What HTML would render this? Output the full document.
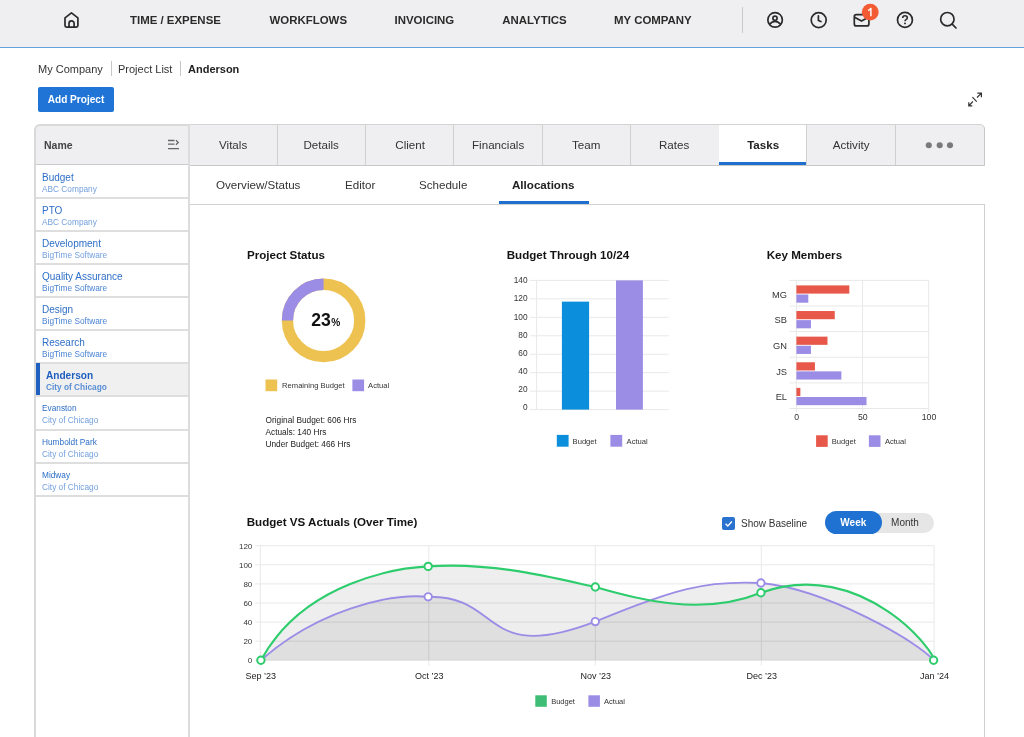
<!DOCTYPE html>
<html><head><meta charset="utf-8">
<style>
*{box-sizing:border-box;margin:0;padding:0}
html,body{width:1024px;height:737px;overflow:hidden;background:#fff}
body>*{will-change:transform}
body{position:relative;font-family:"Liberation Sans",sans-serif;color:#333}
.a{position:absolute;white-space:nowrap}
#nav{position:absolute;left:0;top:0;width:1024px;height:47px;background:#efeff1;border-bottom:1px solid #68a2dc;height:48px}
.nv{position:absolute;top:13.2px;font-weight:bold;font-size:11.45px;color:#2b2b2b;line-height:14px}
.bc{position:absolute;top:62px;font-size:11px;line-height:14px;color:#333}
.sep{position:absolute;top:61px;width:1px;height:15px;background:#c8c8c8}
#addbtn{position:absolute;left:38px;top:87px;width:76px;height:25px;background:#1f74d6;border-radius:2px;color:#fff;font-weight:bold;font-size:10.1px;line-height:25px;text-align:center}


.ln{position:absolute;background:#d9d9d9}
.hdt{position:absolute;left:43.8px;top:138.6px;font-weight:bold;font-size:10.5px;color:#444;line-height:13px}
.t1{position:absolute;left:41.9px;font-size:10px;color:#2e6fc7;line-height:12px;white-space:nowrap}
.t2{position:absolute;left:41.9px;font-size:8.3px;color:#6b9bd9;line-height:10px;white-space:nowrap}
.tab{position:absolute;top:126px;height:40px;text-align:center;font-size:11.6px;line-height:38.5px;color:#333}
.sub{position:absolute;top:178px;font-size:11.6px;line-height:14px;color:#333}

</style></head>
<body>
<div id="nav">
  <svg class="a" style="left:60px;top:8px" width="24" height="24" viewBox="0 0 24 24">
    <path d="M5 9.9 L11.45 4.8 L17.9 9.9 V17.6 Q17.9 19.1 16.4 19.1 H6.5 Q5 19.1 5 17.6 Z" fill="none" stroke="#2a2a2a" stroke-width="1.7" stroke-linejoin="round"/>
    <path d="M9 19.1 V15.5 A2.55 2.55 0 0 1 14.1 15.5 V19.1" fill="none" stroke="#2a2a2a" stroke-width="1.7"/>
  </svg>
  <svg class="a" style="left:760px;top:0" width="210" height="40" viewBox="760 0 210 40">
    <g fill="none" stroke="#2a2a2a" stroke-width="1.7">
      <circle cx="775.1" cy="19.9" r="7.25"/>
      <circle cx="775" cy="18.2" r="2.1"/>
      <path d="M769.3 24.3 Q775 18.4 780.8 24.3"/>
      <circle cx="818.7" cy="20.1" r="7.5"/>
      <path d="M818.4 15.8 V20.4 L820.9 21.6" stroke-linecap="round" stroke-linejoin="round"/>
      <rect x="854.3" y="14.6" width="14.6" height="11.3" rx="2"/>
      <path d="M854.6 17.2 L861.5 21.1 L868.5 17.2" stroke-linejoin="round"/>
      <circle cx="904.95" cy="19.9" r="7.45"/>
      <circle cx="947.35" cy="19.2" r="6.7"/>
      <path d="M952.2 24.2 L956 28" stroke-linecap="round"/>
    </g>
    <path d="M902.7 17.9 Q902.7 15.7 905 15.7 Q907.3 15.7 907.3 17.7 Q907.3 19 906 19.6 Q905 20.1 905 21.3" fill="none" stroke="#2a2a2a" stroke-width="1.6"/><circle cx="905" cy="23.4" r="0.95" fill="#2a2a2a"/>
    <circle cx="870.25" cy="12.15" r="8.4" fill="#f35b34"/>
    <path d="M868.1 10.6 Q870.2 9.9 870.9 8.1 V16.2" fill="none" stroke="#fff" stroke-width="1.45"/>
  </svg>
  <div class="nv" style="left:130px">TIME / EXPENSE</div>
  <div class="nv" style="left:269.5px">WORKFLOWS</div>
  <div class="nv" style="left:394.5px">INVOICING</div>
  <div class="nv" style="left:502.3px">ANALYTICS</div>
  <div class="nv" style="left:614px">MY COMPANY</div>
  <div class="a" style="left:742px;top:7px;width:1px;height:26px;background:#c9c9cc"></div>
</div>
<div class="bc" style="left:38px">My Company</div>
<div class="sep" style="left:111px"></div>
<div class="bc" style="left:118px">Project List</div>
<div class="sep" style="left:180px"></div>
<div class="bc" style="left:187.5px;font-weight:bold;color:#222">Anderson</div>
<div id="addbtn">Add Project</div>
<div class="a" style="left:34px;top:124px;width:156px;height:41px;background:#efeff1;border-left:2px solid #d9d9d9;border-top:2px solid #d9d9d9;border-top-left-radius:6px"></div>
<div class="ln" style="left:34px;top:150px;width:2px;height:600px;background:#d9d9d9"></div>
<div class="ln" style="left:36px;top:164px;width:153px;height:1px;background:#cbcbcb"></div>
<div class="hdt">Name</div>
<svg class="a" style="left:167.3px;top:139px" width="13" height="12" viewBox="0 0 13 12"><g stroke="#666" stroke-width="1.3" fill="none"><path d="M1 1.5H7.5M1 5.2H7.5M1 9.6H12"/><path d="M9 1.3 L11.2 3.5 L9 5.7"/></g></svg>
<div class="t1" style="top:171.5px">Budget</div><div class="t2" style="top:183.7px;color:#74a0de">ABC Company</div>
<div class="ln" style="left:36px;top:197px;width:152px;height:2px;background:#dedede"></div>
<div class="t1" style="top:204.5px">PTO</div><div class="t2" style="top:216.7px;color:#74a0de">ABC Company</div>
<div class="ln" style="left:36px;top:230px;width:152px;height:2px;background:#dedede"></div>
<div class="t1" style="top:237.5px">Development</div><div class="t2" style="top:249.7px;color:#74a0de">BigTime Software</div>
<div class="ln" style="left:36px;top:263px;width:152px;height:2px;background:#dedede"></div>
<div class="t1" style="top:270.5px">Quality Assurance</div><div class="t2" style="top:282.7px;color:#4a84d4">BigTime Software</div>
<div class="ln" style="left:36px;top:296px;width:152px;height:2px;background:#dedede"></div>
<div class="t1" style="top:303.5px">Design</div><div class="t2" style="top:315.7px;color:#4a84d4">BigTime Software</div>
<div class="ln" style="left:36px;top:329px;width:152px;height:2px;background:#dedede"></div>
<div class="t1" style="top:336.5px">Research</div><div class="t2" style="top:348.7px;color:#4a84d4">BigTime Software</div>
<div class="ln" style="left:36px;top:362px;width:152px;height:2px;background:#dedede"></div>
<div class="a" style="left:36px;top:364px;width:152px;height:31px;background:#f0f0f0"></div>
<div class="a" style="left:36px;top:363px;width:3.6px;height:33px;background:#1f5fc0"></div>
<div class="t1" style="left:46.2px;top:370px;font-weight:bold;font-size:10.1px;color:#1f5fc0">Anderson</div>
<div class="t2" style="left:46.2px;top:381.5px;font-weight:bold;color:#5a8ed6">City of Chicago</div>
<div class="ln" style="left:36px;top:395px;width:152px;height:2px;background:#dedede"></div>
<div class="t1" style="top:401.8px;font-size:8.3px">Evanston</div><div class="t2" style="top:414.6px;color:#74a0de">City of Chicago</div>
<div class="ln" style="left:36px;top:429px;width:152px;height:2px;background:#dedede"></div>
<div class="t1" style="top:435.8px;font-size:8.3px">Humboldt Park</div><div class="t2" style="top:448.6px;color:#74a0de">City of Chicago</div>
<div class="ln" style="left:36px;top:462px;width:152px;height:2px;background:#dedede"></div>
<div class="t1" style="top:468.8px;font-size:8.3px">Midway</div><div class="t2" style="top:481.6px;color:#74a0de">City of Chicago</div>
<div class="ln" style="left:36px;top:495px;width:152px;height:2px;background:#dedede"></div>
<div class="a" style="left:190px;top:124px;width:795px;height:42px;background:#efeff1;border-top:1px solid #d3d3d3;border-right:1px solid #c8c8c8;border-bottom:1px solid #c8c8c8;border-top-right-radius:5px"></div>
<div class="a" style="left:719px;top:125px;width:87.5px;height:40px;background:#fff"></div>
<div class="a" style="left:719px;top:162px;width:87.5px;height:3px;background:#1f6fd0"></div>
<div class="tab" style="left:189.00px;width:88.28px;">Vitals</div>
<div class="tab" style="left:277.28px;width:88.28px;">Details</div>
<div class="tab" style="left:365.56px;width:88.28px;">Client</div>
<div class="tab" style="left:453.84px;width:88.28px;">Financials</div>
<div class="tab" style="left:542.12px;width:88.28px;">Team</div>
<div class="tab" style="left:630.40px;width:88.28px;">Rates</div>
<div class="tab" style="left:718.68px;width:88.28px;font-weight:bold;color:#222">Tasks</div>
<div class="tab" style="left:806.96px;width:88.28px;">Activity</div>
<div class="ln" style="left:277px;top:125px;width:1px;height:40px;background:#d0d0d0"></div>
<div class="ln" style="left:365px;top:125px;width:1px;height:40px;background:#d0d0d0"></div>
<div class="ln" style="left:453px;top:125px;width:1px;height:40px;background:#d0d0d0"></div>
<div class="ln" style="left:542px;top:125px;width:1px;height:40px;background:#d0d0d0"></div>
<div class="ln" style="left:630px;top:125px;width:1px;height:40px;background:#d0d0d0"></div>
<div class="ln" style="left:806px;top:125px;width:1px;height:40px;background:#d0d0d0"></div>
<div class="ln" style="left:895px;top:125px;width:1px;height:40px;background:#d0d0d0"></div>
<svg class="a" style="left:924px;top:141px" width="30" height="8" viewBox="0 0 30 8"><g fill="#7a7a7a"><circle cx="4.8" cy="4.2" r="3.05"/><circle cx="15.7" cy="4.2" r="3.05"/><circle cx="26" cy="4.2" r="3.05"/></g></svg>
<div class="ln" style="left:188px;top:125px;width:2px;height:612px;background:#dcdcdc"></div>
<div class="ln" style="left:190px;top:204px;width:795px;height:1px;background:#d0d0d0"></div>
<div class="ln" style="left:984px;top:204px;width:1px;height:533px;background:#d0d0d0"></div>
<div class="sub" style="left:216px">Overview/Status</div><div class="sub" style="left:344.5px">Editor</div><div class="sub" style="left:419px">Schedule</div><div class="sub" style="left:512px;font-weight:bold;color:#222">Allocations</div>
<div class="a" style="left:499px;top:201px;width:89.5px;height:3px;background:#1f6fd0"></div>
<svg class="a" style="left:966px;top:90px" width="18" height="18" viewBox="966 90 18 18"><g fill="none" stroke="#333" stroke-width="1.2"><path d="M977.3 93.1H981.4V97.2M981.2 93.3L977 97.5M968.8 102.3V105.8H972.3M969 105.6L972.9 101.5M972.4 97.2L976.7 101.6"/></g></svg>
<svg id="charts" style="position:absolute;left:0;top:0" width="1024" height="737" viewBox="0 0 1024 737"><text x="247" y="258.6" font-family="Liberation Sans" font-size="11.6" font-weight="bold" fill="#141414" text-anchor="start">Project Status</text>
<circle cx="323.6" cy="320.4" r="36.15" fill="none" stroke="#edc250" stroke-width="11.3"/>
<path d="M323.6 284.25 A36.15 36.15 0 0 0 287.45 320.4" fill="none" stroke="#9b8ce6" stroke-width="11.3"/>
<text x="311.3" y="325.5" font-family="Liberation Sans" font-size="17.6" font-weight="bold" fill="#111" text-anchor="start">23</text>
<text x="331.2" y="325.5" font-family="Liberation Sans" font-size="10.2" font-weight="bold" fill="#111" text-anchor="start">%</text>
<rect x="265.5" y="379.5" width="11.7" height="11.7" fill="#edc250"/>
<text x="282.1" y="388.2" font-family="Liberation Sans" font-size="7.6" font-weight="normal" fill="#333" text-anchor="start">Remaining Budget</text>
<rect x="352.4" y="379.5" width="11.7" height="11.7" fill="#9b8ce6"/>
<text x="368.1" y="388.2" font-family="Liberation Sans" font-size="7.6" font-weight="normal" fill="#333" text-anchor="start">Actual</text>
<text x="265.5" y="423" font-family="Liberation Sans" font-size="8.3" font-weight="normal" fill="#222" text-anchor="start">Original Budget: 606 Hrs</text>
<text x="265.5" y="434.75" font-family="Liberation Sans" font-size="8.3" font-weight="normal" fill="#222" text-anchor="start">Actuals: 140 Hrs</text>
<text x="265.5" y="446.5" font-family="Liberation Sans" font-size="8.3" font-weight="normal" fill="#222" text-anchor="start">Under Budget: 466 Hrs</text>
<text x="506.7" y="258.5" font-family="Liberation Sans" font-size="11.6" font-weight="bold" fill="#141414" text-anchor="start">Budget Through 10/24</text>
<line x1="530" y1="280.4" x2="668.7" y2="280.4" stroke="#e8e8e8" stroke-width="1"/>
<text x="527.5" y="283.3" font-family="Liberation Sans" font-size="8.3" font-weight="normal" fill="#333" text-anchor="end">140</text>
<line x1="530" y1="298.86" x2="668.7" y2="298.86" stroke="#e8e8e8" stroke-width="1"/>
<text x="527.5" y="301.41" font-family="Liberation Sans" font-size="8.3" font-weight="normal" fill="#333" text-anchor="end">120</text>
<line x1="530" y1="317.31" x2="668.7" y2="317.31" stroke="#e8e8e8" stroke-width="1"/>
<text x="527.5" y="319.52" font-family="Liberation Sans" font-size="8.3" font-weight="normal" fill="#333" text-anchor="end">100</text>
<line x1="530" y1="335.77" x2="668.7" y2="335.77" stroke="#e8e8e8" stroke-width="1"/>
<text x="527.5" y="337.63" font-family="Liberation Sans" font-size="8.3" font-weight="normal" fill="#333" text-anchor="end">80</text>
<line x1="530" y1="354.23" x2="668.7" y2="354.23" stroke="#e8e8e8" stroke-width="1"/>
<text x="527.5" y="355.74" font-family="Liberation Sans" font-size="8.3" font-weight="normal" fill="#333" text-anchor="end">60</text>
<line x1="530" y1="372.69" x2="668.7" y2="372.69" stroke="#e8e8e8" stroke-width="1"/>
<text x="527.5" y="373.85" font-family="Liberation Sans" font-size="8.3" font-weight="normal" fill="#333" text-anchor="end">40</text>
<line x1="530" y1="391.14" x2="668.7" y2="391.14" stroke="#e8e8e8" stroke-width="1"/>
<text x="527.5" y="391.96" font-family="Liberation Sans" font-size="8.3" font-weight="normal" fill="#333" text-anchor="end">20</text>
<line x1="530" y1="409.6" x2="668.7" y2="409.6" stroke="#e8e8e8" stroke-width="1"/>
<text x="527.5" y="410.07" font-family="Liberation Sans" font-size="8.3" font-weight="normal" fill="#333" text-anchor="end">0</text>
<line x1="536.6" y1="280.4" x2="536.6" y2="409.6" stroke="#e8e8e8" stroke-width="1"/>
<rect x="561.9" y="301.63" width="27.2" height="107.97" fill="#0b8fdc"/>
<rect x="616" y="280.4" width="26.9" height="129.2" fill="#9b8ce6"/>
<rect x="556.8" y="434.9" width="11.8" height="11.8" fill="#0b8fdc"/>
<text x="572.6" y="443.9" font-family="Liberation Sans" font-size="7.6" font-weight="normal" fill="#333" text-anchor="start">Budget</text>
<rect x="610.4" y="434.9" width="11.8" height="11.8" fill="#9b8ce6"/>
<text x="626.6" y="443.9" font-family="Liberation Sans" font-size="7.6" font-weight="normal" fill="#333" text-anchor="start">Actual</text>
<text x="766.7" y="258.5" font-family="Liberation Sans" font-size="11.6" font-weight="bold" fill="#141414" text-anchor="start">Key Members</text>
<line x1="789.5" y1="280.4" x2="928.7" y2="280.4" stroke="#e8e8e8" stroke-width="1"/>
<line x1="789.5" y1="306.02" x2="928.7" y2="306.02" stroke="#e8e8e8" stroke-width="1"/>
<line x1="789.5" y1="331.64" x2="928.7" y2="331.64" stroke="#e8e8e8" stroke-width="1"/>
<line x1="789.5" y1="357.26" x2="928.7" y2="357.26" stroke="#e8e8e8" stroke-width="1"/>
<line x1="789.5" y1="382.88" x2="928.7" y2="382.88" stroke="#e8e8e8" stroke-width="1"/>
<line x1="789.5" y1="408.5" x2="928.7" y2="408.5" stroke="#e8e8e8" stroke-width="1"/>
<line x1="796.4" y1="280.4" x2="796.4" y2="412.5" stroke="#e8e8e8" stroke-width="1"/>
<line x1="862.55" y1="280.4" x2="862.55" y2="412.5" stroke="#e8e8e8" stroke-width="1"/>
<line x1="928.7" y1="280.4" x2="928.7" y2="412.5" stroke="#e8e8e8" stroke-width="1"/>
<rect x="796.4" y="285.4" width="52.92" height="8.2" fill="#e8584a"/>
<rect x="796.4" y="294.5" width="11.91" height="8.2" fill="#9b8ce6"/>
<text x="787" y="297.81" font-family="Liberation Sans" font-size="9.3" font-weight="normal" fill="#333" text-anchor="end">MG</text>
<rect x="796.4" y="311.02" width="38.37" height="8.2" fill="#e8584a"/>
<rect x="796.4" y="320.12" width="14.55" height="8.2" fill="#9b8ce6"/>
<text x="787" y="323.43" font-family="Liberation Sans" font-size="9.3" font-weight="normal" fill="#333" text-anchor="end">SB</text>
<rect x="796.4" y="336.64" width="31.09" height="8.2" fill="#e8584a"/>
<rect x="796.4" y="345.74" width="14.55" height="8.2" fill="#9b8ce6"/>
<text x="787" y="349.05" font-family="Liberation Sans" font-size="9.3" font-weight="normal" fill="#333" text-anchor="end">GN</text>
<rect x="796.4" y="362.26" width="18.52" height="8.2" fill="#e8584a"/>
<rect x="796.4" y="371.36" width="44.98" height="8.2" fill="#9b8ce6"/>
<text x="787" y="374.67" font-family="Liberation Sans" font-size="9.3" font-weight="normal" fill="#333" text-anchor="end">JS</text>
<rect x="796.4" y="387.88" width="3.97" height="8.2" fill="#e8584a"/>
<rect x="796.4" y="396.98" width="70.12" height="8.2" fill="#9b8ce6"/>
<text x="787" y="400.29" font-family="Liberation Sans" font-size="9.3" font-weight="normal" fill="#333" text-anchor="end">EL</text>
<text x="796.7" y="420" font-family="Liberation Sans" font-size="8.7" font-weight="normal" fill="#333" text-anchor="middle">0</text>
<text x="862.85" y="420" font-family="Liberation Sans" font-size="8.7" font-weight="normal" fill="#333" text-anchor="middle">50</text>
<text x="929" y="420" font-family="Liberation Sans" font-size="8.7" font-weight="normal" fill="#333" text-anchor="middle">100</text>
<rect x="816.1" y="435.3" width="11.6" height="11.6" fill="#e8584a"/>
<text x="831.8" y="444.2" font-family="Liberation Sans" font-size="7.6" font-weight="normal" fill="#333" text-anchor="start">Budget</text>
<rect x="868.9" y="435.3" width="11.6" height="11.6" fill="#9b8ce6"/>
<text x="884.9" y="444.2" font-family="Liberation Sans" font-size="7.6" font-weight="normal" fill="#333" text-anchor="start">Actual</text>
<text x="246.7" y="525.9" font-family="Liberation Sans" font-size="11.6" font-weight="bold" fill="#141414" text-anchor="start">Budget VS Actuals (Over Time)</text>
<line x1="255.2" y1="545.7" x2="934.2" y2="545.7" stroke="#e8e8e8" stroke-width="1"/>
<text x="252.3" y="548.6" font-family="Liberation Sans" font-size="8" font-weight="normal" fill="#333" text-anchor="end">120</text>
<line x1="255.2" y1="564.8" x2="934.2" y2="564.8" stroke="#e8e8e8" stroke-width="1"/>
<text x="252.3" y="567.7" font-family="Liberation Sans" font-size="8" font-weight="normal" fill="#333" text-anchor="end">100</text>
<line x1="255.2" y1="583.9" x2="934.2" y2="583.9" stroke="#e8e8e8" stroke-width="1"/>
<text x="252.3" y="586.8" font-family="Liberation Sans" font-size="8" font-weight="normal" fill="#333" text-anchor="end">80</text>
<line x1="255.2" y1="603" x2="934.2" y2="603" stroke="#e8e8e8" stroke-width="1"/>
<text x="252.3" y="605.9" font-family="Liberation Sans" font-size="8" font-weight="normal" fill="#333" text-anchor="end">60</text>
<line x1="255.2" y1="622.1" x2="934.2" y2="622.1" stroke="#e8e8e8" stroke-width="1"/>
<text x="252.3" y="625" font-family="Liberation Sans" font-size="8" font-weight="normal" fill="#333" text-anchor="end">40</text>
<line x1="255.2" y1="641.2" x2="934.2" y2="641.2" stroke="#e8e8e8" stroke-width="1"/>
<text x="252.3" y="644.1" font-family="Liberation Sans" font-size="8" font-weight="normal" fill="#333" text-anchor="end">20</text>
<line x1="255.2" y1="660.3" x2="934.2" y2="660.3" stroke="#e8e8e8" stroke-width="1"/>
<text x="252.3" y="663.2" font-family="Liberation Sans" font-size="8" font-weight="normal" fill="#333" text-anchor="end">0</text>
<line x1="260.3" y1="545.7" x2="260.3" y2="665.5999999999999" stroke="#e8e8e8" stroke-width="1"/>
<text x="260.8" y="679.2" font-family="Liberation Sans" font-size="9" font-weight="normal" fill="#222" text-anchor="middle">Sep &#8217;23</text>
<line x1="428.8" y1="545.7" x2="428.8" y2="665.5999999999999" stroke="#e8e8e8" stroke-width="1"/>
<text x="429.3" y="679.2" font-family="Liberation Sans" font-size="9" font-weight="normal" fill="#222" text-anchor="middle">Oct &#8217;23</text>
<line x1="595.3" y1="545.7" x2="595.3" y2="665.5999999999999" stroke="#e8e8e8" stroke-width="1"/>
<text x="595.8" y="679.2" font-family="Liberation Sans" font-size="9" font-weight="normal" fill="#222" text-anchor="middle">Nov &#8217;23</text>
<line x1="761.3" y1="545.7" x2="761.3" y2="665.5999999999999" stroke="#e8e8e8" stroke-width="1"/>
<text x="761.8" y="679.2" font-family="Liberation Sans" font-size="9" font-weight="normal" fill="#222" text-anchor="middle">Dec &#8217;23</text>
<line x1="934.1" y1="545.7" x2="934.1" y2="665.5999999999999" stroke="#e8e8e8" stroke-width="1"/>
<text x="934.6" y="679.2" font-family="Liberation Sans" font-size="9" font-weight="normal" fill="#222" text-anchor="middle">Jan &#8217;24</text>
<path d="M260.90 660.30 C304.12 580.80 400.06 567.80 428.20 566.40 C492.43 561.83 553.24 577.77 595.30 587.00 C638.52 599.62 702.59 616.66 760.90 592.80 C863.28 555.75 938.64 656.26 933.60 660.30 L933.6 660.3 L260.9 660.3 Z" fill="rgba(0,0,0,0.068)"/>
<path d="M260.90 660.30 C317.33 610.20 389.20 592.95 428.20 596.80 C502.33 595.28 481.25 665.07 595.30 621.60 C673.60 589.03 705.86 580.24 760.90 583.00 C826.55 588.99 918.87 642.20 933.60 660.30 L933.6 660.3 L260.9 660.3 Z" fill="rgba(0,0,0,0.068)"/>
<path d="M260.90 660.30 C317.33 610.20 389.20 592.95 428.20 596.80 C502.33 595.28 481.25 665.07 595.30 621.60 C673.60 589.03 705.86 580.24 760.90 583.00 C826.55 588.99 918.87 642.20 933.60 660.30" fill="none" stroke="#9b8ce6" stroke-width="1.9"/>
<path d="M260.90 660.30 C304.12 580.80 400.06 567.80 428.20 566.40 C492.43 561.83 553.24 577.77 595.30 587.00 C638.52 599.62 702.59 616.66 760.90 592.80 C863.28 555.75 938.64 656.26 933.60 660.30" fill="none" stroke="#2dcc6c" stroke-width="2.1"/>
<circle cx="428.2" cy="596.8" r="3.7" fill="#fff" stroke="#9b8ce6" stroke-width="1.9"/>
<circle cx="595.3" cy="621.6" r="3.7" fill="#fff" stroke="#9b8ce6" stroke-width="1.9"/>
<circle cx="760.9" cy="583" r="3.7" fill="#fff" stroke="#9b8ce6" stroke-width="1.9"/>
<circle cx="260.9" cy="660.3" r="3.7" fill="#fff" stroke="#2dcc6c" stroke-width="2"/>
<circle cx="428.2" cy="566.4" r="3.7" fill="#fff" stroke="#2dcc6c" stroke-width="2"/>
<circle cx="595.3" cy="587" r="3.7" fill="#fff" stroke="#2dcc6c" stroke-width="2"/>
<circle cx="760.9" cy="592.8" r="3.7" fill="#fff" stroke="#2dcc6c" stroke-width="2"/>
<circle cx="933.6" cy="660.3" r="3.7" fill="#fff" stroke="#2dcc6c" stroke-width="2"/>
<rect x="535.3" y="695.3" width="11.5" height="11.5" fill="#3dbd76"/>
<text x="551.2" y="704.2" font-family="Liberation Sans" font-size="7.5" font-weight="normal" fill="#333" text-anchor="start">Budget</text>
<rect x="588.4" y="695.3" width="11.5" height="11.5" fill="#9b8ce6"/>
<text x="604.1" y="704.2" font-family="Liberation Sans" font-size="7.5" font-weight="normal" fill="#333" text-anchor="start">Actual</text></svg><div class="a" style="left:722px;top:516.8px;width:13.4px;height:13.2px;background:#2a72d0;border-radius:2px"><svg class="a" style="left:0;top:0" width="13.4" height="13.2" viewBox="0 0 13.4 13.2"><path d="M3.6 6.8 L5.8 8.9 L9.9 4.6" fill="none" stroke="#fff" stroke-width="1.4"/></svg></div>
<div class="a" style="left:741px;top:517.6px;font-size:10px;line-height:12px;color:#333">Show Baseline</div>
<div class="a" style="left:825px;top:512.9px;width:109px;height:20.2px;border-radius:10.1px;background:#e6e6e6"></div>
<div class="a" style="left:825px;top:511.3px;width:56.7px;height:23.3px;border-radius:11.65px;background:#1f72d1"></div>
<div class="a" style="left:825px;top:516.6px;width:56.7px;text-align:center;font-size:10px;line-height:12px;color:#fff;font-weight:bold">Week</div>
<div class="a" style="left:881.2px;top:516.8px;width:48px;text-align:center;font-size:10px;line-height:12px;color:#333">Month</div>
</body></html>
